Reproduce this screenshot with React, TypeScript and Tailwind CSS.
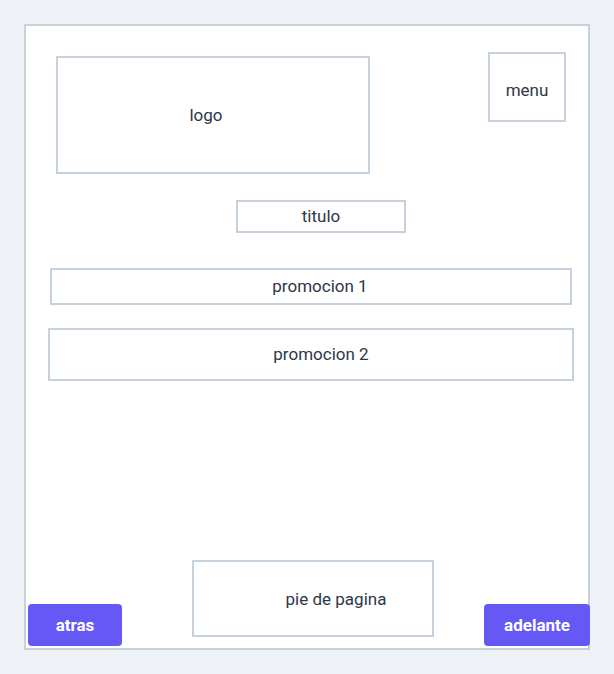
export default function App() {
  const box = "flex items-center justify-center border-2 border-[#c5d1dc] bg-white text-[17px] text-[#2d3748]";
  const btn = "flex h-[42px] items-center justify-center rounded-[4px] bg-[#6558f5] pt-[2px] text-[17px] font-bold text-white";

  return (
    <div className="min-h-screen bg-[#eef2f6] p-[24px] font-['Roboto','Noto_Sans',sans-serif]">
      <div className="flex h-[626px] w-[566px] flex-col border-2 border-[#c5d1dc] bg-white">
        {/* header */}
        <div className="flex items-start">
          <div className={`${box} ml-[30px] mt-[30px] h-[118px] w-[314px] pr-[14px] pt-[2px]`}>logo</div>
          <div className={`${box} ml-auto mr-[22px] mt-[26px] h-[70px] w-[78px] pt-[8px]`}>menu</div>
        </div>

        <div className={`${box} ml-[210px] mt-[26px] h-[33px] w-[170px] pt-[1px]`}>titulo</div>

        <div className={`${box} ml-[24px] mt-[35px] h-[37px] w-[522px] pl-[18px] pt-[1px]`}>promocion 1</div>
        <div className={`${box} ml-[22px] mt-[23px] h-[53px] w-[526px] pl-[20px] pt-[1px]`}>promocion 2</div>

        {/* footer */}
        <div className="mt-auto flex items-end pb-[2px]">
          <button className={`${btn} ml-[2px] w-[94px]`}>atras</button>
          <div className={`${box} mb-[9px] ml-[70px] h-[77px] w-[242px] pl-[46px] pt-[2px]`}>pie de pagina</div>
          <button className={`${btn} -mr-[2px] ml-auto w-[106px]`}>adelante</button>
        </div>
      </div>
    </div>
  );
}
